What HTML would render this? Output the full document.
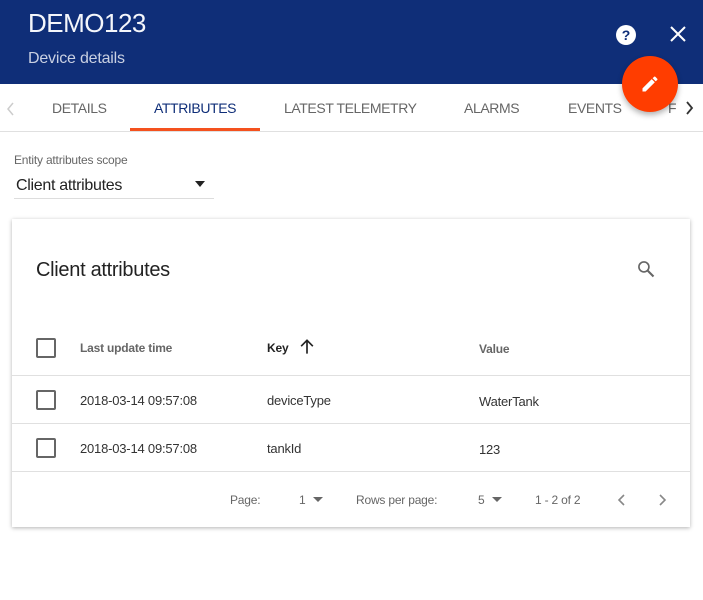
<!DOCTYPE html>
<html><head><style>
body{margin:0;width:703px;height:600px;background:#fff;font-family:"Liberation Sans",sans-serif;position:relative;overflow:hidden}
.a{position:absolute;white-space:nowrap}
.hdr{position:absolute;left:0;top:0;width:703px;height:84px;background:#0f2e78}
.tab{position:absolute;top:100px;font-size:14px;color:#666;letter-spacing:-0.4px}
.cb{position:absolute;left:36px;width:16px;height:16px;border:2px solid #666;border-radius:2px}
.line{position:absolute;left:12px;width:678px;height:1px;background:#e0e0e0}
.sm{font-size:12px;color:#666;letter-spacing:-0.2px}
.cell{font-size:13px;color:#333;letter-spacing:-0.2px}
</style></head><body>
<div class="hdr"></div>
<div class="a" style="left:28px;top:8px;font-size:26px;color:#f4f6fb;letter-spacing:-0.5px">DEMO123</div>
<div class="a" style="left:28px;top:50px;font-size:16px;color:#c9d0e2;letter-spacing:-0.2px">Device details</div>
<svg class="a" style="left:614px;top:23px" width="24" height="24" viewBox="0 0 24 24"><circle cx="12" cy="12" r="10" fill="#fff"/><text x="12" y="17" text-anchor="middle" font-size="14" font-weight="bold" fill="#0f2e78" font-family="Liberation Sans">?</text></svg>
<svg class="a" style="left:668px;top:24px" width="20" height="20" viewBox="0 0 20 20"><path d="M3 3L17 17M17 3L3 17" stroke="#fff" stroke-width="2"/></svg>
<svg class="a" style="left:6px;top:102px" width="10" height="14" viewBox="0 0 10 14"><path d="M7 1L2 7l5 6" stroke="#ccc" stroke-width="1.5" fill="none"/></svg>
<div class="tab" style="left:52px">DETAILS</div>
<div class="tab" style="left:154px;color:#0f2e78">ATTRIBUTES</div>
<div class="a" style="left:130px;top:128px;width:130px;height:3px;background:#f4511e"></div>
<div class="tab" style="left:284px">LATEST TELEMETRY</div>
<div class="tab" style="left:464px">ALARMS</div>
<div class="tab" style="left:568px">EVENTS</div>
<div class="tab" style="left:668px">F</div>
<svg class="a" style="left:684px;top:101px" width="10" height="14" viewBox="0 0 10 14"><path d="M3 1l5 6-5 6" stroke="#333" stroke-width="1.8" fill="none"/></svg>
<div class="a" style="left:0;top:131px;width:703px;height:1px;background:#e0e0e0"></div>
<div class="a" style="left:622px;top:56px;width:56px;height:56px;border-radius:50%;background:#ff3d00;box-shadow:0 3px 6px rgba(0,0,0,.3)"></div>
<svg class="a" style="left:640px;top:74px" width="20" height="20" viewBox="0 0 24 24"><path d="M3 17.25V21h3.75L17.81 9.94l-3.75-3.75L3 17.25zM20.71 7.04a1 1 0 000-1.41l-2.34-2.34a1 1 0 00-1.41 0l-1.83 1.83 3.75 3.75 1.83-1.83z" fill="#fff"/></svg>
<div class="a sm" style="left:14px;top:153px">Entity attributes scope</div>
<div class="a" style="left:16px;top:177px;font-size:16px;color:#222;letter-spacing:-0.3px">Client attributes</div>
<div class="a" style="left:195px;top:181px;border-left:5px solid transparent;border-right:5px solid transparent;border-top:6px solid #222"></div>
<div class="a" style="left:14px;top:198px;width:200px;height:1px;background:#ddd"></div>
<div class="a" style="left:12px;top:219px;width:678px;height:308px;background:#fff;box-shadow:0 1px 4px rgba(0,0,0,.3)"></div>
<div class="a" style="left:36px;top:259px;font-size:20px;color:#222;letter-spacing:-0.3px">Client attributes</div>
<svg class="a" style="left:636px;top:259px" width="20" height="20" viewBox="0 0 24 24"><circle cx="9.5" cy="9.5" r="6" stroke="#666" stroke-width="2" fill="none"/><path d="M14 14l7 7" stroke="#666" stroke-width="2.5"/></svg>
<div class="cb" style="top:338px"></div>
<div class="a sm" style="left:80px;top:341px;font-weight:bold">Last update time</div>
<div class="a sm" style="left:267px;top:341px;font-weight:bold;color:#222">Key</div>
<svg class="a" style="left:297px;top:337px" width="20" height="20" viewBox="0 0 24 24"><path d="M12 20V5M5 11l7-7 7 7" stroke="#222" stroke-width="2" fill="none"/></svg>
<div class="a sm" style="left:479px;top:342px;font-weight:bold">Value</div>
<div class="line" style="top:375px"></div>
<div class="cb" style="top:390px"></div>
<div class="a cell" style="left:80px;top:393px">2018-03-14 09:57:08</div>
<div class="a cell" style="left:267px;top:393px">deviceType</div>
<div class="a cell" style="left:479px;top:394px">WaterTank</div>
<div class="line" style="top:423px"></div>
<div class="cb" style="top:438px"></div>
<div class="a cell" style="left:80px;top:441px">2018-03-14 09:57:08</div>
<div class="a cell" style="left:267px;top:441px">tankId</div>
<div class="a cell" style="left:479px;top:442px">123</div>
<div class="line" style="top:471px"></div>
<div class="a sm" style="left:230px;top:493px">Page:</div>
<div class="a sm" style="left:299px;top:493px">1</div>
<div class="a" style="left:313px;top:497px;border-left:5px solid transparent;border-right:5px solid transparent;border-top:5px solid #666"></div>
<div class="a sm" style="left:356px;top:493px">Rows per page:</div>
<div class="a sm" style="left:478px;top:493px">5</div>
<div class="a" style="left:492px;top:497px;border-left:5px solid transparent;border-right:5px solid transparent;border-top:5px solid #666"></div>
<div class="a sm" style="left:535px;top:493px">1 - 2 of 2</div>
<svg class="a" style="left:614px;top:492px" width="16" height="16" viewBox="0 0 16 16"><path d="M10 3L5 8l5 5" stroke="#888" stroke-width="1.6" fill="none"/></svg>
<svg class="a" style="left:654px;top:492px" width="16" height="16" viewBox="0 0 16 16"><path d="M6 3l5 5-5 5" stroke="#888" stroke-width="1.6" fill="none"/></svg>
</body></html>
